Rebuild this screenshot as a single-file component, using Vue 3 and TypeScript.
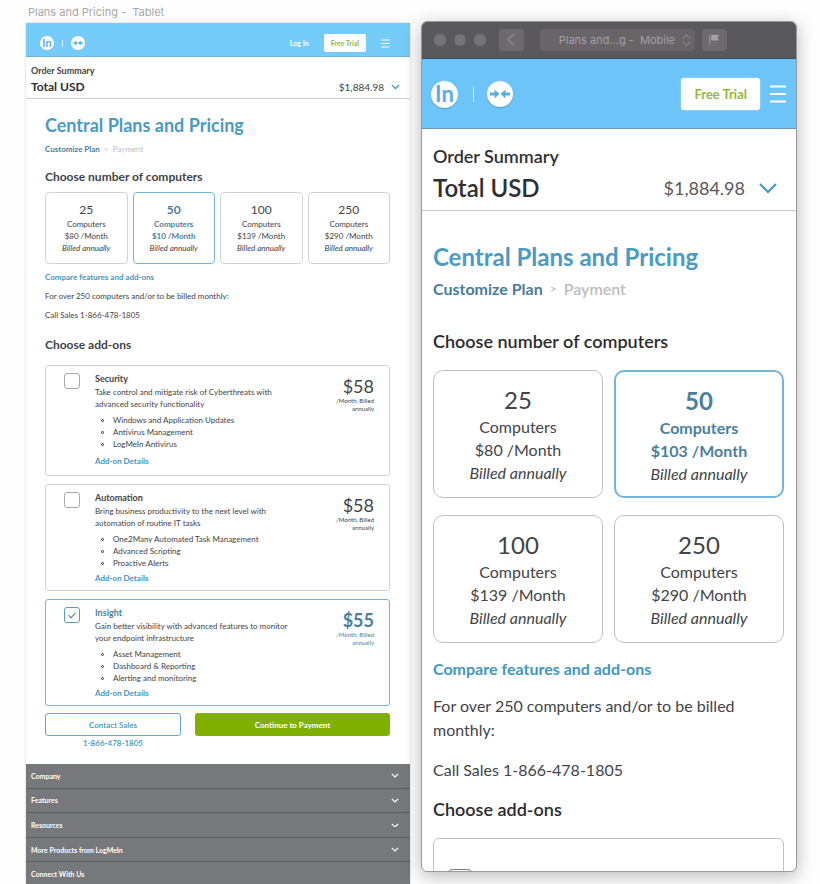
<script setup lang="ts">
import { ref } from 'vue'

interface Plan {
  count: number
  price: string
}

interface Addon {
  name: string
  description: string
  price: string
  features: string[]
  checked: boolean
}

const tabletPlans: Plan[] = [
  { count: 25, price: '$80' },
  { count: 50, price: '$10' },
  { count: 100, price: '$139' },
  { count: 250, price: '$290' },
]

const phonePlans: Plan[] = [
  { count: 25, price: '$80' },
  { count: 50, price: '$103' },
  { count: 100, price: '$139' },
  { count: 250, price: '$290' },
]

const tabletPlan = ref(50)
const phonePlan = ref(50)
const phoneSecurity = ref(false)

const addons = ref<Addon[]>([
  {
    name: 'Security',
    description: 'Take control and mitigate risk of Cyberthreats with advanced security functionality',
    price: '$58',
    features: ['Windows and Application Updates', 'Antivirus Management', 'LogMeIn Antivirus'],
    checked: false,
  },
  {
    name: 'Automation',
    description: 'Bring business productivity to the next level with automation of routine IT tasks',
    price: '$58',
    features: ['One2Many Automated Task Management', 'Advanced Scripting', 'Proactive Alerts'],
    checked: false,
  },
  {
    name: 'Insight',
    description: 'Gain better visibility with advanced features to monitor your endpoint infrastructure',
    price: '$55',
    features: ['Asset Management', 'Dashboard & Reporting', 'Alerting and monitoring'],
    checked: true,
  },
])

const footerSections = [
  { label: 'Company', expandable: true },
  { label: 'Features', expandable: true },
  { label: 'Resources', expandable: true },
  { label: 'More Products from LogMeIn', expandable: true },
  { label: 'Connect With Us', expandable: false },
]
</script>

<template>
  <div class="stage">
    <section class="tablet">
      <p class="artboard-label">Plans and Pricing -&nbsp; Tablet</p>
      <div class="artboard">
        <header class="topbar">
          <a class="logo" href="#">In</a>
          <span class="divider"></span>
          <a class="product" href="#" aria-label="Central">
            <svg viewBox="0 0 26 26">
              <path d="M4 13h6M22 13h-6" stroke="currentColor" stroke-width="2.5" />
              <path d="M8 8.5l5 4.5-5 4.5zM18 8.5L13 13l5 4.5z" fill="currentColor" />
            </svg>
          </a>
          <a class="login" href="#">Log In</a>
          <button class="trial" type="button">Free Trial</button>
          <button class="menu" type="button" aria-label="Menu">
            <svg viewBox="0 0 18 18"><path d="M1 2h16M1 9h16M1 16h16" /></svg>
          </button>
        </header>

        <section class="summary">
          <h2>Order Summary</h2>
          <div class="total">
            <strong>Total USD</strong>
            <span>$1,884.98</span>
            <button type="button" aria-label="Show order details">
              <svg viewBox="0 0 20 12"><path d="M2 2l8 8 8-8" /></svg>
            </button>
          </div>
        </section>

        <main class="content">
          <h1>Central Plans and Pricing</h1>
          <nav class="crumbs">
            <a href="#">Customize Plan</a><i>&gt;</i><span>Payment</span>
          </nav>
          <h2 class="section-title">Choose number of computers</h2>
          <div class="plans">
            <button
              v-for="plan in tabletPlans"
              :key="plan.count"
              type="button"
              class="plan"
              :class="{ selected: tabletPlan === plan.count }"
              :aria-pressed="tabletPlan === plan.count"
              @click="tabletPlan = plan.count"
            >
              <b>{{ plan.count }}</b>
              <span>Computers</span>
              <span>{{ plan.price }} /Month</span>
              <em>Billed annually</em>
            </button>
          </div>
          <a class="compare" href="#">Compare features and add-ons</a>
          <p class="note">For over 250 computers and/or to be billed monthly:</p>
          <p class="note">Call Sales 1-866-478-1805</p>
          <h2 class="section-title">Choose add-ons</h2>

          <div class="addons">
            <article
              v-for="addon in addons"
              :key="addon.name"
              class="addon"
              :class="{ selected: addon.checked }"
            >
              <input :id="`addon-${addon.name}`" v-model="addon.checked" type="checkbox" />
              <div class="addon-body">
                <label :for="`addon-${addon.name}`">{{ addon.name }}</label>
                <p>{{ addon.description }}</p>
                <ul>
                  <li v-for="feature in addon.features" :key="feature">{{ feature }}</li>
                </ul>
                <a href="#">Add-on Details</a>
              </div>
              <div class="addon-price">
                <strong>{{ addon.price }}</strong>
                <span>/Month, Billed annually</span>
              </div>
            </article>
          </div>

          <div class="actions">
            <button class="contact" type="button">Contact Sales</button>
            <button class="continue" type="button">Continue to Payment</button>
            <a href="#">1-866-478-1805</a>
          </div>
        </main>

        <footer class="footer">
          <button v-for="item in footerSections" :key="item.label" type="button">
            {{ item.label }}
            <svg v-if="item.expandable" viewBox="0 0 20 12"><path d="M2 2l8 8 8-8" /></svg>
          </button>
        </footer>
      </div>
    </section>

    <section class="phone">
      <div class="titlebar">
        <i class="dot"></i><i class="dot"></i><i class="dot"></i>
        <button class="back" type="button" aria-label="Back">
          <svg viewBox="0 0 26 22"><path d="M16 5l-7 6 7 6" /></svg>
        </button>
        <button class="picker" type="button">
          <span>Plans and...g -&nbsp; Mobile</span>
          <svg viewBox="0 0 10 14"><path d="M1 5l4-4 4 4M1 9l4 4 4-4" /></svg>
        </button>
        <button class="flag" type="button" aria-label="Start point">
          <svg viewBox="0 0 26 22">
            <path d="M8 6v10" />
            <path d="M9.500 6H18l-2 3 2 3H9.500z" fill="currentColor" stroke="none" />
          </svg>
        </button>
      </div>

      <header class="topbar">
        <a class="logo" href="#">In</a>
        <span class="divider"></span>
        <a class="product" href="#" aria-label="Central">
          <svg viewBox="0 0 26 26">
            <path d="M3 13h6M23 13h-6" stroke="currentColor" stroke-width="3" />
            <path d="M7.500 8.500l5 4.500-5 4.500zM18.500 8.500l-5 4.500 5 4.500z" fill="currentColor" />
          </svg>
        </a>
        <button class="trial" type="button">Free Trial</button>
        <button class="menu" type="button" aria-label="Menu">
          <svg viewBox="0 0 18 18"><path d="M1 1.500h16M1 9h16M1 16.500h16" /></svg>
        </button>
      </header>

      <section class="summary">
        <h2>Order Summary</h2>
        <div class="total">
          <strong>Total USD</strong>
          <span>$1,884.98</span>
          <button type="button" aria-label="Show order details">
            <svg viewBox="0 0 20 12"><path d="M2 2l8 8 8-8" /></svg>
          </button>
        </div>
      </section>

      <main class="content">
        <h1>Central Plans and Pricing</h1>
        <nav class="crumbs">
          <a href="#">Customize Plan</a><i>&gt;</i><span>Payment</span>
        </nav>
        <h2 class="section-title">Choose number of computers</h2>
        <div class="plans">
          <button
            v-for="plan in phonePlans"
            :key="plan.count"
            type="button"
            class="plan"
            :class="{ selected: phonePlan === plan.count }"
            :aria-pressed="phonePlan === plan.count"
            @click="phonePlan = plan.count"
          >
            <b>{{ plan.count }}</b>
            <span>Computers</span>
            <span>{{ plan.price }} /Month</span>
            <em>Billed annually</em>
          </button>
        </div>
        <a class="compare" href="#">Compare features and add-ons</a>
        <p class="note">For over 250 computers and/or to be billed monthly:</p>
        <p class="note">Call Sales 1-866-478-1805</p>
        <h2 class="section-title">Choose add-ons</h2>
        <div class="phone-addon">
          <input v-model="phoneSecurity" type="checkbox" aria-label="Security" />
        </div>
      </main>
    </section>
  </div>
</template>

<style>
body {
  background: #fefefe;
}
</style>

<style scoped>
* {
  box-sizing: border-box;
  margin: 0;
  padding: 0;
}

.stage {
  display: grid;
  grid-template-columns: 384fr 376fr;
  gap: 11px;
  height: 100vh;
  padding: 0 23px 0 26px;
  overflow: hidden;
  font-family: Lato, sans-serif;
  color: #434446;
}

button {
  border: 0;
  background: none;
  font: inherit;
  color: inherit;
  cursor: pointer;
}

a {
  color: #4297c0;
  text-decoration: none;
}

svg {
  display: block;
  fill: none;
  stroke: currentColor;
}

h1,
h2,
strong {
  font-weight: 700;
}

/* Shared pieces */

.topbar {
  display: flex;
  align-items: center;
}

.logo,
.product {
  display: flex;
  align-items: center;
  justify-content: center;
  border-radius: 50%;
  background: #fff;
  color: #5eaedd;
  font-weight: 700;
}

.product svg {
  width: 100%;
  stroke: none;
}

.divider {
  width: 1px;
  background: #d5effc;
}

.trial {
  background: #fff;
  color: #95b83c;
  font-weight: 700;
}

.menu {
  color: #fff;
}

.total {
  display: flex;
  align-items: center;
}

.total strong {
  flex: 1;
  color: #2f2f31;
}

.total button {
  color: #4297c0;
}

.total svg {
  stroke-width: 3;
}

h1 {
  color: #4a9bc5;
}

.crumbs {
  display: flex;
  align-items: center;
  color: #bdbec0;
}

.crumbs a {
  color: #4b7c97;
  font-weight: 700;
}

.crumbs i {
  font-style: normal;
}

.plans {
  display: grid;
}

.plan {
  display: flex;
  flex-direction: column;
  align-items: center;
  border: 1px solid #d2d3d5;
}

.plan b {
  font-weight: 400;
}

.plan.selected {
  border-color: #72b5d6;
}

.plan.selected b,
.plan.selected span {
  color: #4b7f9d;
  font-weight: 700;
}

.compare {
  display: block;
  font-weight: 700;
}

/* Tablet artboard */

.artboard-label {
  padding: 6px 2px 4px;
  font-family: Inter, sans-serif;
  font-size: 11px;
  line-height: 13px;
  color: #a8a8a8;
}

.artboard {
  background: #fff;
  font-size: 8px;
  line-height: 12px;
  box-shadow: 0 0 2px #c4c4c4;
}

.tablet .topbar {
  height: 34px;
  padding: 7px 20px 0 14px;
  border-bottom: 1px solid #6fb4da;
  background: #75ccf8;
}

.tablet .logo {
  width: 14px;
  height: 14px;
  font-size: 11px;
}

.tablet .divider {
  height: 7px;
  margin: 0 8px;
}

.tablet .product {
  width: 14px;
  height: 14px;
}

.tablet .login {
  margin-left: auto;
  color: #fff;
  font-size: 7px;
  font-weight: 700;
}

.tablet .trial {
  height: 18px;
  margin: 0 15px;
  padding: 0 7px;
  border-radius: 2px;
  font-size: 7px;
}

.tablet .menu svg {
  width: 9px;
  stroke-width: 2;
}

.tablet .summary {
  height: 42px;
  padding: 8px 10px 0 5px;
  border-bottom: 1px solid #d0d0d0;
}

.tablet .summary h2 {
  font-size: 9px;
  line-height: 12px;
}

.tablet .total {
  height: 20px;
  gap: 7px;
  font-size: 10px;
}

.tablet .total strong {
  font-size: 12px;
}

.tablet .total svg {
  width: 9px;
}

.tablet .content {
  padding: 13px 20px 0 19px;
}

.tablet h1 {
  font-size: 18px;
  line-height: 26px;
}

.tablet .crumbs {
  gap: 4px;
  height: 12px;
  margin-top: 5px;
}

.tablet .section-title {
  margin-top: 14px;
  font-size: 12px;
  line-height: 16px;
}

.tablet .plans {
  grid-template-columns: repeat(4, 1fr);
  gap: 5px;
  margin-top: 7px;
}

.tablet .plan {
  padding: 9px 0;
  border-radius: 4px;
  line-height: 12px;
}

.tablet .plan b {
  font-size: 12px;
  line-height: 16px;
}

.tablet .compare {
  margin-top: 7px;
}

.tablet .note {
  margin-top: 7px;
}

.tablet .note + .section-title {
  margin-top: 16px;
}

.addons {
  display: grid;
  gap: 8px;
  margin-top: 12px;
}

.addon {
  display: flex;
  padding: 6px 15px 6px 18px;
  border: 1px solid #d2d3d5;
  border-radius: 3px;
}

.addon:first-child {
  padding-bottom: 8px;
}

.addon.selected {
  border-color: #72b5d6;
}

input[type='checkbox'] {
  appearance: none;
  border: 1px solid #a5a7aa;
  background: #fff;
}

.addon input {
  display: flex;
  justify-content: center;
  width: 16px;
  height: 16px;
  margin-top: 1px;
  border-radius: 3px;
}

.addon input:checked {
  border-color: #5c9dbe;
}

.addon input:checked::after {
  content: '';
  width: 3px;
  height: 6px;
  margin-top: 3px;
  border: solid #4b7f9d;
  border-width: 0 1px 1px 0;
  transform: rotate(45deg);
}

.addon-body {
  flex: 1;
  padding-left: 15px;
}

.addon-body label {
  display: block;
  font-size: 9px;
  font-weight: 700;
  line-height: 14px;
}

.addon-body p {
  max-width: 200px;
}

.addon-body ul {
  margin-top: 4px;
  list-style: none;
}

.addon-body li {
  display: flex;
  align-items: center;
  gap: 9px;
  padding-left: 6px;
}

.addon-body li::before {
  content: '';
  box-sizing: border-box;
  width: 3px;
  height: 3px;
  border: 1px solid #2f2f31;
  border-radius: 50%;
}

.addon-body a {
  display: block;
  margin-top: 3px;
  font-weight: 700;
}

.addon:first-child .addon-body a {
  margin-top: 5px;
}

.addon-price {
  width: 40px;
  padding-top: 4px;
  text-align: right;
  font-size: 6px;
  line-height: 8px;
}

.addon-price strong {
  display: block;
  margin-bottom: 1px;
  font-size: 18px;
  font-weight: 400;
  line-height: 20px;
}

.addon-price span {
  display: block;
}

.addon.selected label,
.addon.selected .addon-price {
  color: #4b7f9d;
}

.addon.selected .addon-price strong {
  font-weight: 700;
}

.actions {
  display: grid;
  grid-template-columns: 136fr 195fr;
  column-gap: 14px;
  row-gap: 1px;
  margin-top: 7px;
  text-align: center;
}

.actions button {
  height: 23px;
  border-radius: 3px;
}

.actions a {
  font-weight: 600;
}

.contact {
  border: 1px solid #67a6c6;
  color: #4297c0;
  font-weight: 600;
}

.continue {
  background: #82b000;
  color: #fff;
  font-weight: 700;
}

.footer {
  display: grid;
  grid-auto-rows: 1fr;
  height: 123px;
  margin-top: 15px;
  background: #77787b;
}

.footer button {
  display: flex;
  align-items: center;
  justify-content: space-between;
  padding: 0 11px 0 5px;
  border-bottom: 1px solid #5c5d60;
  color: #fff;
  font-size: 7px;
  font-weight: 700;
}

.footer svg {
  width: 8px;
  stroke-width: 3;
}

/* Phone preview window */

.phone {
  height: calc(100vh - 33px);
  margin-top: 21px;
  overflow: hidden;
  border: 1px solid #98999b;
  border-radius: 6px;
  background: #fff;
  font-size: 16px;
  line-height: 24px;
  box-shadow: 0 4px 18px rgb(0 0 0 / 28%);
}

.titlebar {
  display: flex;
  align-items: center;
  height: 37px;
  padding-left: 12px;
  border-bottom: 1px solid #2b526c;
  background: #59595b;
  color: #a3a1a4;
  font-family: Inter, sans-serif;
  font-size: 11px;
}

.dot {
  width: 12px;
  height: 12px;
  margin-right: 8px;
  border-radius: 50%;
  background: #757477;
}

.titlebar button {
  height: 22px;
  border-radius: 3px;
  background: #6c6a6d;
}

.titlebar .back,
.titlebar .flag {
  width: 25px;
}

.titlebar .back {
  margin-left: 5px;
}

.titlebar .picker {
  display: flex;
  align-items: center;
  justify-content: flex-end;
  gap: 7px;
  width: 155px;
  margin: 0 7px 0 16px;
  padding-right: 4px;
  background: #696467;
}

.picker svg {
  width: 9px;
}

.phone .topbar {
  height: 70px;
  padding: 1px 9px 0;
  border-bottom: 1px solid #6899b7;
  background: #6dc4f8;
}

.phone .logo,
.phone .product {
  width: 27px;
  height: 27px;
  box-shadow: 0 1px 1px #5a9dc4;
}

.phone .logo {
  font-size: 22px;
}

.phone .product {
  width: 26px;
  height: 26px;
}

.phone .divider {
  height: 15px;
  margin: 0 13px 0 15px;
}

.phone .trial {
  height: 32px;
  margin: 0 9px 0 auto;
  padding: 0 13px;
  border-radius: 3px;
  font-size: 13px;
  box-shadow: 0 0 2px #bde3f7;
}

.phone .menu svg {
  width: 18px;
  stroke-width: 2;
}

.phone .summary {
  height: 82px;
  padding: 15px 18px 0 11px;
  border-bottom: 1px solid #c9c9cb;
}

.phone .summary h2 {
  color: #2f2f31;
  font-size: 18px;
  font-weight: 600;
}

.phone .total {
  height: 40px;
  color: #58595b;
  font-size: 18px;
}

.phone .total strong {
  font-size: 24px;
  font-weight: 600;
}

.phone .total button {
  margin-left: 13px;
}

.phone .total svg {
  width: 20px;
  stroke-width: 2;
}

.phone .content {
  padding: 30px 12px 0 11px;
}

.phone h1 {
  font-size: 24px;
  line-height: 32px;
}

.phone .crumbs {
  gap: 7px;
  margin-top: 4px;
  font-weight: 600;
}

.phone .crumbs i {
  font-size: 12px;
}

.phone .section-title {
  margin-top: 28px;
  color: #2b2b2d;
  font-size: 18px;
  font-weight: 600;
}

.phone .plans {
  grid-template-columns: 1fr 1fr;
  gap: 17px 11px;
  margin-top: 17px;
}

.phone .plan {
  height: 128px;
  padding: 14px 0;
  border-color: #bfc0c2;
  border-radius: 10px;
  line-height: 23px;
}

.phone .plan b {
  font-size: 24px;
  line-height: 30px;
}

.phone .plan.selected {
  border: 2px solid #72b5d6;
}

.phone .compare {
  margin-top: 14px;
}

.phone .note {
  margin-top: 13px;
}

.phone .note + .note {
  margin-top: 16px;
}

.phone .note + .section-title {
  margin-top: 15px;
}

.phone-addon {
  height: 180px;
  margin-top: 17px;
  padding: 30px 14px;
  border: 1px solid #bfc0c2;
  border-radius: 6px;
}

.phone-addon input {
  display: block;
  width: 24px;
  height: 24px;
  border-color: #77787b;
  border-radius: 4px;
}
</style>
